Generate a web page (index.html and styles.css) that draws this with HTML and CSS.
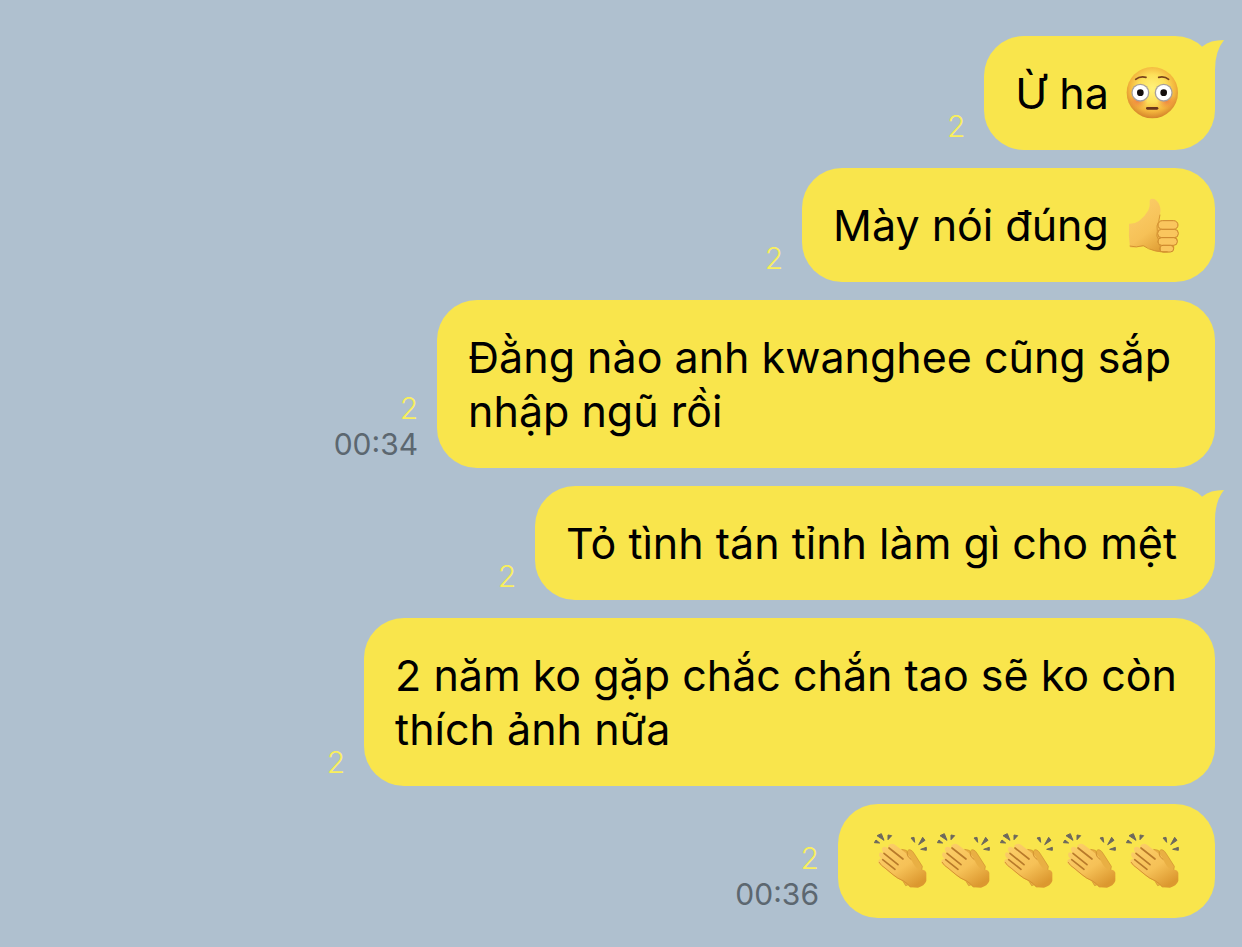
FILE: index.html
```html
<!DOCTYPE html>
<html lang="vi">
<head>
<meta charset="utf-8">
<title>Chat</title>
<link rel="stylesheet" href="styles.css">
</head>
<body>
<svg class="defs" aria-hidden="true">
  <defs>
    <radialGradient id="faceFill" cx="0.5" cy="0.42" r="0.6">
      <stop offset="0" stop-color="#fff27c"/><stop offset="0.45" stop-color="#fde05a"/><stop offset="0.75" stop-color="#f3b43c"/><stop offset="1" stop-color="#d07c28"/>
    </radialGradient>
    <radialGradient id="blush"><stop offset="0" stop-color="#ee7840" stop-opacity="0.8"/><stop offset="1" stop-color="#ee8040" stop-opacity="0"/></radialGradient>
    <linearGradient id="skin" x1="0" y1="0" x2="0.7" y2="1">
      <stop offset="0" stop-color="#fdd06c"/><stop offset="0.6" stop-color="#f6c157"/><stop offset="1" stop-color="#dc982f"/>
    </linearGradient>
    <symbol id="face" viewBox="48 132 162 174">
      <circle cx="127" cy="218" r="77" fill="url(#faceFill)"/>
      <ellipse cx="83" cy="244" rx="30" ry="23" fill="url(#blush)"/>
      <ellipse cx="170" cy="244" rx="30" ry="23" fill="url(#blush)"/>
      <g fill="none" stroke="#7a431b" stroke-width="5" stroke-linecap="round"><path d="M77 178Q89 168 108 172"/><path d="M146 172Q164 168 176 178"/></g>
      <circle cx="91" cy="218" r="27" fill="#a8a09c"/><circle cx="161" cy="218" r="27" fill="#a8a09c"/>
      <circle cx="91" cy="218" r="23" fill="#fff"/><circle cx="161" cy="218" r="23" fill="#fff"/>
      <circle cx="91" cy="218" r="10" fill="#140e0c"/><circle cx="161" cy="218" r="10" fill="#140e0c"/>
      <path d="M112 265H141" stroke="#6b351b" stroke-width="8" stroke-linecap="round"/>
    </symbol>
    <symbol id="thumb" viewBox="78 48 162 174">
      <path d="M87 131Q104 132 117 123Q136 108 145 91Q151 80 149 66Q148 57 156 56Q168 55 176 70Q184 85 180 104L177 121L219 121Q235 124 234 136Q234 144 226 148Q236 151 235 161Q234 168 228 172Q235 177 232 187Q229 194 220 195Q225 199 222 207Q218 216 204 217Q173 219 156 210Q143 202 130 199Q108 203 90 202Q85 170 87 131Z" fill="url(#skin)"/>
      <g fill="#fac65e" stroke="#cc862c" stroke-width="3">
        <rect x="174" y="122" width="60" height="26" rx="13"/><rect x="173" y="148" width="62" height="25" rx="12"/><rect x="174" y="173" width="58" height="23" rx="11"/><rect x="179" y="196" width="42" height="20" rx="10"/>
      </g>
      <path d="M180 104L176 125Q168 136 172 154Q167 169 175 178Q171 190 181 198V212" fill="none" stroke="#d79634" stroke-width="3"/>
      <path d="M89 198Q109 204 130 197Q145 208 164 212Q182 216 203 215" fill="none" stroke="#d59330" stroke-width="3"/>
    </symbol>
    <symbol id="clap" viewBox="27 36 162 174">
      <g fill="#6d685d" stroke="#6d685d" stroke-width="3" stroke-linejoin="round"><path d="M28 68L33 60L44 69Z"/><path d="M36 47L49 41L57 61Z"/><path d="M69 45L80 47L69 59Z"/><path d="M138 54L147 52L149 67Z"/><path d="M173 52L180 61L161 74Z"/><path d="M184 82V91L167 88Z"/></g>
      <path d="M110 88L124 91L128 101Q125 89 135 89Q143 91 151 106L172 139L166 180L122 197L113 182Z" fill="#e9af43" stroke="#cf902f" stroke-width="2"/>
      <path d="M72 87Q65 78 75 73Q82 68 91 75L130 105Q135 108 139 119Q143 128 149 137Q159 151 174 149Q182 151 184 158L184 183Q178 198 159 203L137 202Q127 191 111 182Q94 175 82 164L46 135Q36 126 42 119Q48 114 56 122Q37 108 44 98Q49 94 58 102Q46 89 53 82Q60 77 72 87Z" fill="url(#skin)"/>
      <g fill="none" stroke="#b87a2a" stroke-width="5" stroke-linecap="round"><path d="M72 84L114 117"/><path d="M57 100L99 134"/><path d="M53 119L90 148"/></g>
      <path d="M42 126Q49 138 60 144L84 164Q98 176 114 182Q128 190 137 202" fill="none" stroke="#d6942f" stroke-width="3"/>
      <path d="M126 101Q127 111 139 119" fill="none" stroke="#ce8d2e" stroke-width="3"/>
    </symbol>
  </defs>
</svg>
<main class="chat">
  <div class="message">
    <div class="meta"><span class="unread">2</span></div>
    <p class="bubble">Ừ ha <svg class="emoji" role="img" aria-label="😳"><use href="#face"/></svg><svg class="tail" viewBox="0 0 32 40" aria-hidden="true"><path d="M0 20L11 10Q18 4 32 4Q23 15 23 34V40H0Z"/></svg></p>
  </div>
  <div class="message">
    <div class="meta"><span class="unread">2</span></div>
    <p class="bubble">Mày nói đúng <svg class="emoji" role="img" aria-label="👍"><use href="#thumb"/></svg></p>
  </div>
  <div class="message">
    <div class="meta"><span class="unread">2</span><time>00:34</time></div>
    <p class="bubble roomier">Đằng nào anh kwanghee cũng sắp<br>nhập ngũ rồi</p>
  </div>
  <div class="message">
    <div class="meta"><span class="unread">2</span></div>
    <p class="bubble roomy">Tỏ tình tán tỉnh làm gì cho mệt<svg class="tail" viewBox="0 0 32 40" aria-hidden="true"><path d="M0 20L11 10Q18 4 32 4Q23 15 23 34V40H0Z"/></svg></p>
  </div>
  <div class="message">
    <div class="meta"><span class="unread">2</span></div>
    <p class="bubble roomy">2 năm ko gặp chắc chắn tao sẽ ko còn<br>thích ảnh nữa</p>
  </div>
  <div class="message">
    <div class="meta"><span class="unread">2</span><time>00:36</time></div>
    <p class="bubble"><svg class="emoji" role="img" aria-label="👏"><use href="#clap"/></svg><svg class="emoji" role="img" aria-label="👏"><use href="#clap"/></svg><svg class="emoji" role="img" aria-label="👏"><use href="#clap"/></svg><svg class="emoji" role="img" aria-label="👏"><use href="#clap"/></svg><svg class="emoji" role="img" aria-label="👏"><use href="#clap"/></svg></p>
  </div>
</main>
</body>
</html>
```
FILE: styles.css
```css
* { box-sizing: border-box; }
body {
  margin: 0;
  background: #afc0cf;
  font-family: Inter, "Noto Sans", sans-serif;
}
.defs { position: absolute; width: 0; height: 0; }
.chat {
  display: flex;
  flex-direction: column;
  gap: 18px;
  padding: 36px 27px 29px;
}
.message {
  display: flex;
  justify-content: flex-end;
  align-items: flex-end;
  gap: 19px;
}
.meta {
  display: flex;
  flex-direction: column;
  align-items: flex-end;
  padding-bottom: 6px;
  font-size: 30px;
  line-height: 36px;
  color: #5c6770;
}
.unread {
  color: #f9ef5c;
  font-weight: 300;
}
.bubble {
  position: relative;
  margin: 0;
  padding: 30px 31px;
  border-radius: 40px;
  background: #f9e54c;
  color: #000;
  font-size: 43px;
  line-height: 54px;
}
.roomy { padding-right: 38px; }
.roomier { padding-right: 44px; }
.emoji {
  width: 54px;
  height: 58px;
  margin: -2px 4px -2px 5px;
  vertical-align: top;
}
.tail {
  position: absolute;
  top: 0;
  right: -9px;
  width: 32px;
  height: 40px;
  fill: #f9e54c;
}
```
